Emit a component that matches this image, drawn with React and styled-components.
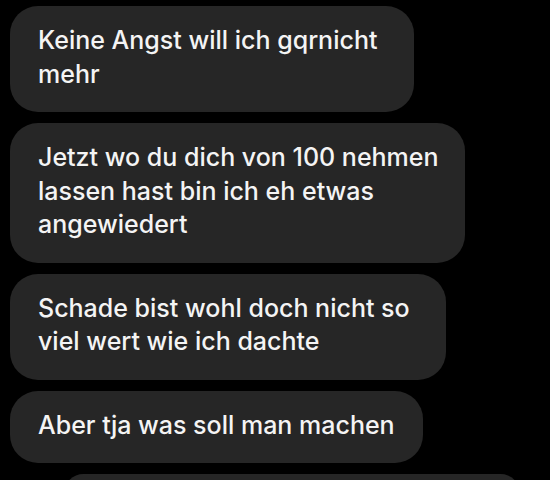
import React from "react";
import styled, { createGlobalStyle } from "styled-components";

const GlobalStyle = createGlobalStyle`
  html, body {
    margin: 0;
    padding: 0;
    background: #000;
  }
  body {
    width: 550px;
    height: 480px;
    overflow: hidden;
  }
`;

const Thread = styled.div`
  display: flex;
  flex-direction: column;
  align-items: flex-start;
  gap: 11px;
  padding: 6px 0 0 10px;
  background: #000;
  height: 480px;
  box-sizing: border-box;
  overflow: hidden;
`;

const Bubble = styled.div`
  box-sizing: border-box;
  flex-shrink: 0;
  width: ${p => p.w}px;
  margin-left: ${p => p.offset || 0}px;
  padding: 18px 0 21px 28px;
  border-radius: 28px;
  background: #262626;
  color: #f4f4f4;
  font-family: Inter, "Open Sans", sans-serif;
  font-size: 25px;
  font-weight: 500;
  line-height: 33.5px;
  white-space: nowrap;
`;

const messages = [
  { w: 404, lines: ["Keine Angst will ich gqrnicht", "mehr"] },
  {
    w: 455,
    lines: ["Jetzt wo du dich von 100 nehmen", "lassen hast bin ich eh etwas", "angewiedert"]
  },
  { w: 436, lines: ["Schade bist wohl doch nicht so", "viel wert wie ich dachte"] },
  { w: 413, lines: ["Aber tja was soll man machen"] },
  { w: 456, offset: 54, lines: [""] }
];

const App = () => {
  return (
    <>
      <GlobalStyle />
      <Thread>
        {messages.map((m, i) => (
          <Bubble key={i} w={m.w} offset={m.offset}>
            {m.lines.map((line, j) => (
              <React.Fragment key={j}>
                {j > 0 && <br />}
                {line}
              </React.Fragment>
            ))}
          </Bubble>
        ))}
      </Thread>
    </>
  );
};

export default App;
